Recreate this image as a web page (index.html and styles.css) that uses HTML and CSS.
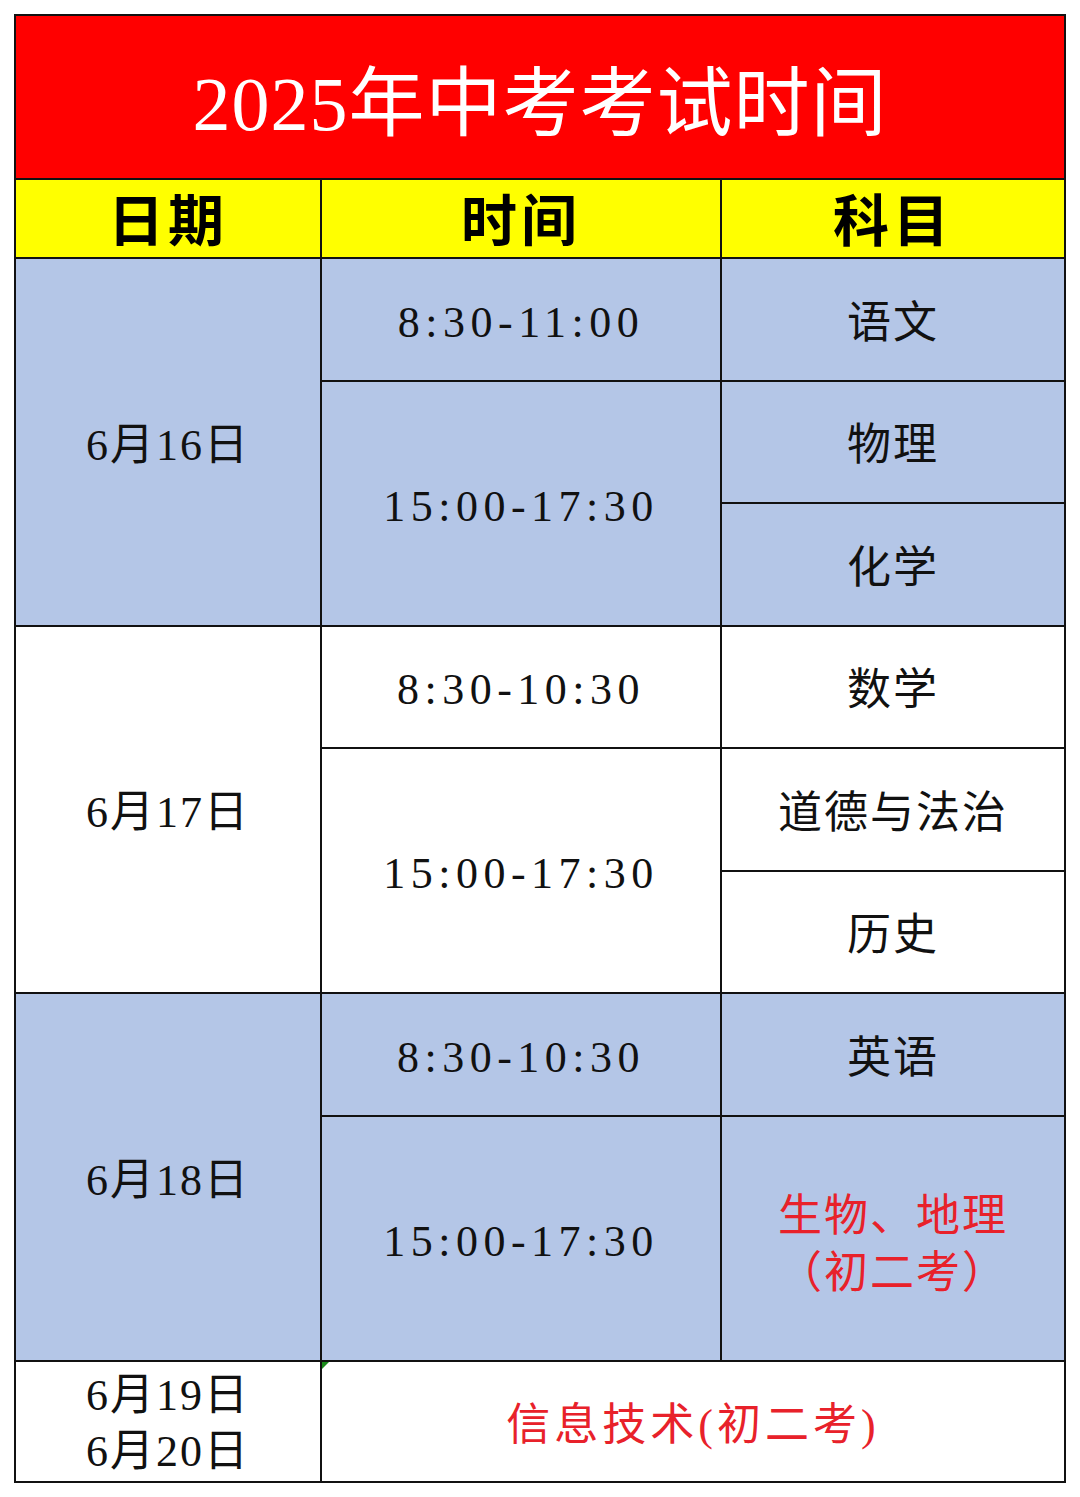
FILE: index.html
```html
<!DOCTYPE html>
<html lang="zh">
<head>
<meta charset="utf-8">
<link rel="stylesheet" href="styles.css">
</head>
<body>
<table class="sched">
  <colgroup>
    <col class="c-date">
    <col class="c-time">
    <col class="c-subj">
  </colgroup>
  <tr class="r-title"><td colspan="3" class="title">2025年中考考试时间</td></tr>
  <tr class="r-head">
    <td class="head">日期</td>
    <td class="head">时间</td>
    <td class="head">科目</td>
  </tr>
  <tr class="r blue">
    <td rowspan="3" class="date">6月16日</td>
    <td class="time">8:30-11:00</td>
    <td class="subj">语文</td>
  </tr>
  <tr class="r blue">
    <td rowspan="2" class="time">15:00-17:30</td>
    <td class="subj">物理</td>
  </tr>
  <tr class="r blue">
    <td class="subj">化学</td>
  </tr>
  <tr class="r">
    <td rowspan="3" class="date">6月17日</td>
    <td class="time">8:30-10:30</td>
    <td class="subj">数学</td>
  </tr>
  <tr class="r">
    <td rowspan="2" class="time">15:00-17:30</td>
    <td class="subj">道德与法治</td>
  </tr>
  <tr class="r">
    <td class="subj">历史</td>
  </tr>
  <tr class="r blue">
    <td rowspan="3" class="date">6月18日</td>
    <td class="time">8:30-10:30</td>
    <td class="subj">英语</td>
  </tr>
  <tr class="r blue">
    <td rowspan="2" class="time">15:00-17:30</td>
    <td rowspan="2" class="subj red">生物、地理<br>（初二考）</td>
  </tr>
  <tr class="r blue"></tr>
  <tr class="r-last">
    <td class="date two">6月19日<br>6月20日</td>
    <td colspan="2" class="info red"><span class="flag"></span>信息技术(初二考)</td>
  </tr>
</table>
</body>
</html>
```

FILE: styles.css
```css
html, body {
  margin: 0;
  padding: 0;
  background: #ffffff;
}
body {
  width: 1080px;
  height: 1497px;
  overflow: hidden;
}
.sched {
  margin: 14px 0 0 14px;
  width: 1050px;
  border-collapse: collapse;
  table-layout: fixed;
  font-family: "Liberation Serif", "Noto Sans CJK SC", serif;
  color: #111;
}
.c-date { width: 306px; }
.c-time { width: 400px; }
.c-subj { width: 344px; }
.sched td {
  border: 2px solid #111;
  padding: 0;
  text-align: center;
  vertical-align: middle;
  font-size: 44px;
  letter-spacing: 2px;
  line-height: 1.25;
}
.r-title { height: 164px; }
.title {
  background: #ff0000;
  color: #ffffff;
  font-size: 76px !important;
  letter-spacing: 1px !important;
  padding-top: 14px !important;
}
.r-head { height: 79px; }
.head {
  background: #ffff00;
  font-size: 56px !important;
  font-weight: 700;
  letter-spacing: 4px !important;
  padding-top: 6px !important;
  color: #000;
}
.r { height: 122.5px; }
.r-last { height: 121px; }
.blue td { background: #b4c6e7; }
.date { padding-top: 7px !important; }
.subj { padding-top: 8px !important; }
.time { letter-spacing: 5.5px !important; padding-top: 6px !important; }
.red { color: #e8212a; }
.subj.red { line-height: 1.3; padding-top: 14px !important; }
.two { line-height: 56px !important; padding-top: 6px !important; }
.info { position: relative; letter-spacing: 4px !important; padding-top: 8px !important; }
.flag {
  position: absolute;
  left: 0;
  top: 0;
  width: 0;
  height: 0;
  border-top: 7px solid #1a8a1a;
  border-right: 7px solid transparent;
}
```
